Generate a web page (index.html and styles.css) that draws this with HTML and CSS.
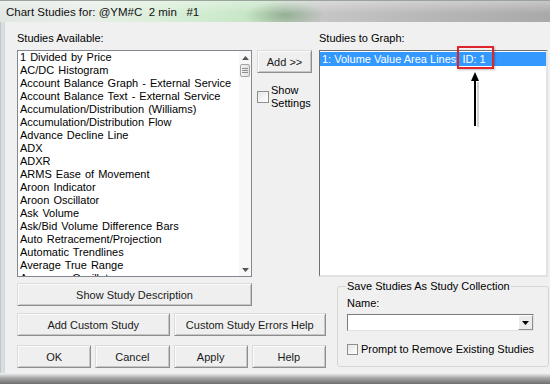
FILE: index.html
```html
<!DOCTYPE html>
<html lang="en">
<head>
    <meta charset="UTF-8">
    <title>Chart Studies</title>
    <link rel="stylesheet" href="styles.css">
</head>
<body>
    <div class="window">
        <div class="titlebar">
            <span class="title">Chart Studies for: @YM#C&nbsp; 2 min &nbsp; #1</span>
        </div>
        <div class="frame">
            <div class="dialog">
                <div class="top">
                    <div class="col-left">
                        <div class="label">Studies Available:</div>
                        <div class="listbox">
                            <ul class="items">
                                <li>1 Divided by Price</li>
                                <li>AC/DC Histogram</li>
                                <li>Account Balance Graph - External Service</li>
                                <li>Account Balance Text - External Service</li>
                                <li>Accumulation/Distribution (Williams)</li>
                                <li>Accumulation/Distribution Flow</li>
                                <li>Advance Decline Line</li>
                                <li>ADX</li>
                                <li>ADXR</li>
                                <li>ARMS Ease of Movement</li>
                                <li>Aroon Indicator</li>
                                <li>Aroon Oscillator</li>
                                <li>Ask Volume</li>
                                <li>Ask/Bid Volume Difference Bars</li>
                                <li>Auto Retracement/Projection</li>
                                <li>Automatic Trendlines</li>
                                <li>Average True Range</li>
                                <li>Awesome Oscillator</li>
                            </ul>
                            <div class="scrollbar">
                                <div class="sb-btn">
                                    <svg width="7" height="4" viewBox="0 0 7 4"><path d="M0 4 L3.5 0 L7 4 Z" fill="#555"/></svg>
                                </div>
                                <div class="sb-thumb">
                                    <span></span><span></span><span></span>
                                </div>
                                <div class="sb-track"></div>
                                <div class="sb-btn">
                                    <svg width="7" height="4" viewBox="0 0 7 4"><path d="M0 0 L7 0 L3.5 4 Z" fill="#555"/></svg>
                                </div>
                            </div>
                        </div>
                    </div>
                    <div class="col-mid">
                        <button class="btn add">Add &gt;&gt;</button>
                        <div class="check show">
                            <span class="box"></span>
                            <span>Show<br>Settings</span>
                        </div>
                    </div>
                    <div class="col-right">
                        <div class="label">Studies to Graph:</div>
                        <div class="listbox graph">
                            <div class="row selected">1: Volume Value Area Lines. ID: 1</div>
                        </div>
                    </div>
                </div>
                <div class="bottom">
                    <div class="buttons">
                        <div class="btn-row one">
                            <button class="btn">Show Study Description</button>
                        </div>
                        <div class="btn-row two">
                            <button class="btn">Add Custom Study</button>
                            <button class="btn">Custom Study Errors Help</button>
                        </div>
                        <div class="btn-row four">
                            <button class="btn">OK</button>
                            <button class="btn">Cancel</button>
                            <button class="btn">Apply</button>
                            <button class="btn">Help</button>
                        </div>
                    </div>
                    <fieldset class="group">
                        <legend>Save Studies As Study Collection</legend>
                        <div class="name-label">Name:</div>
                        <div class="combo">
                            <div class="combo-btn">
                                <svg width="7" height="4" viewBox="0 0 7 4"><path d="M0 0 L7 0 L3.5 4 Z" fill="#000"/></svg>
                            </div>
                        </div>
                        <div class="check prompt">
                            <span class="box"></span>
                            <span>Prompt to Remove Existing Studies</span>
                        </div>
                    </fieldset>
                </div>
            </div>
        </div>
        <div class="frame-bottom"></div>

        <!-- annotation drawn over the screenshot -->
        <div class="callout"></div>
        <svg class="arrow" width="20" height="60" viewBox="0 0 20 60">
            <rect x="11" y="12" width="2" height="45" fill="#b5b5b5" opacity="0.6"/>
            <path d="M9 2 L13 11 L10 11 L10 56 L8 56 L8 11 L5 11 Z" fill="#000"/>
        </svg>
    </div>
</body>
</html>
```

FILE: styles.css
```css
* {
    box-sizing: border-box;
}
body {
    margin: 0;
    width: 550px;
    height: 384px;
    overflow: hidden;
    font-family: "Liberation Sans", Arial, sans-serif;
    font-size: 11px;
    color: #000;
    background: #9a9a9a;
}
.window {
    position: relative;
    width: 550px;
    height: 384px;
    display: flex;
    flex-direction: column;
}
.titlebar {
    height: 22px;
    flex: none;
    display: flex;
    align-items: center;
    padding-left: 6px;
    border-top: 1px solid #9aa39c;
    background:
        linear-gradient(rgba(255,255,255,0.35), rgba(255,255,255,0) 60%),
        radial-gradient(ellipse 40px 14px at 285px 14px, rgba(120,150,120,0.6), rgba(120,150,120,0)),
        linear-gradient(90deg, #e2e7e4 0, #e8eee8 16%, #dbefda 28%, #cdeacd 40%, #c3e2c2 48%, #c2d3c2 52%, #c6c6c6 58%, #b9b9b9 75%, #a9a9a9 100%);
}
.title {
    font-size: 11.5px;
    color: #111;
}
.frame {
    flex: 1;
    display: flex;
    padding-left: 5px;
    background: linear-gradient(90deg, #b9bec1 0, #dfe4e6 2px, #d3d8db 4px);
}
.dialog {
    flex: 1;
    background: #f0f0f0;
    padding: 10px 0 0 12px;
}
.frame-bottom {
    height: 11px;
    flex: none;
    background: linear-gradient(#f4f4f4 0, #d4d6d7 2px, #a5a7a8 5px, #8a8a8a 8px, #6e6e6e 11px);
}

/* top area */
.top {
    display: flex;
}
.label {
    height: 13px;
    line-height: 13px;
    margin-bottom: 5px;
}
.col-left {
    width: 235px;
}
.col-mid {
    width: 55px;
    margin-left: 5px;
    padding-top: 18px;
}
.col-right {
    width: 229px;
    margin-left: 7px;
}
.listbox {
    height: 227px;
    background: #fff;
    border: 1px solid #828790;
    display: flex;
    overflow: hidden;
}
.items {
    flex: 1;
    list-style: none;
    margin: 0;
    padding: 0 0 0 2px;
    overflow: hidden;
}
.items li {
    height: 13px;
    line-height: 13px;
    white-space: nowrap;
    word-spacing: 1px;
}
.scrollbar {
    width: 12px;
    flex: none;
    display: flex;
    flex-direction: column;
    background: #f7f7f7;
}
.sb-btn {
    height: 13px;
    display: flex;
    align-items: center;
    justify-content: center;
}
.sb-thumb {
    height: 13px;
    margin: 0 1px;
    border: 1px solid #a3a3a3;
    border-radius: 2px;
    background: linear-gradient(90deg, #f3f3f3, #e2e2e2);
    display: flex;
    flex-direction: column;
    justify-content: center;
    align-items: center;
    gap: 1px;
}
.sb-thumb span {
    width: 6px;
    height: 1px;
    background: #8d8d8d;
}
.sb-track {
    flex: 1;
}
.graph {
    display: block;
    border-color: #707070 #e3e3e3 #e3e3e3 #707070;
    border-width: 1px 2px 2px 1px;
    padding: 1px 0 0 0;
}
.row {
    height: 14px;
    line-height: 14px;
    padding-left: 2px;
    white-space: nowrap;
}
.selected {
    background: #3399ff;
    color: #fff;
}

/* buttons */
.btn {
    font-family: inherit;
    font-size: 11px;
    color: #1a1a1a;
    height: 23px;
    padding: 0;
    background: #efefef;
    border: 1px solid;
    border-color: #dcdcdc #8e8e8e #8e8e8e #dcdcdc;
    box-shadow: inset 1px 1px #fbfbfb, inset -1px -1px #c6c6c6;
}
.add {
    width: 55px;
}
.check {
    display: flex;
    align-items: center;
    line-height: 13px;
}
.box {
    width: 12px;
    height: 12px;
    flex: none;
    margin-right: 2px;
    border: 1px solid #8e8f8f;
    background: linear-gradient(135deg, #e6e6e6, #fff);
}
.show {
    margin-top: 11px;
}

/* bottom area */
.bottom {
    display: flex;
    margin-top: 3px;
}
.buttons {
    width: 309px;
    padding-top: 3px;
}
.btn-row {
    display: grid;
    column-gap: 4px;
}
.one {
    grid-template-columns: 235px;
}
.two {
    grid-template-columns: 1fr 1fr;
    margin-top: 7px;
}
.four {
    grid-template-columns: 1fr 1fr 1fr 1fr;
    margin-top: 9px;
}
.group {
    width: 212px;
    height: 87px;
    margin: 0 0 0 11px;
    padding: 0 9px;
    border: 1px solid #d5d5d5;
    border-radius: 3px;
}
.group legend {
    padding: 0 1px;
    margin-left: -1px;
    line-height: 13px;
}
.name-label {
    line-height: 13px;
    margin-top: 4px;
}
.combo {
    width: 187px;
    height: 17px;
    margin-top: 4px;
    background: #fff;
    border: 1px solid;
    border-color: #7a7a7a #e3e3e3 #e3e3e3 #7a7a7a;
    display: flex;
    justify-content: flex-end;
}
.combo-btn {
    width: 15px;
    background: #ececec;
    border: 1px solid;
    border-color: #fff #8e8e8e #8e8e8e #fff;
    display: flex;
    align-items: center;
    justify-content: center;
}
.prompt {
    margin-top: 12px;
}
.prompt .box {
    width: 11px;
    height: 11px;
    margin-right: 3px;
}

/* annotation */
.callout {
    position: absolute;
    left: 457px;
    top: 46px;
    width: 37px;
    height: 23px;
    border: 2px solid #e0242b;
    box-shadow: 1px 1px 2px rgba(0,0,0,0.25);
}
.arrow {
    position: absolute;
    left: 466px;
    top: 70px;
}
```
